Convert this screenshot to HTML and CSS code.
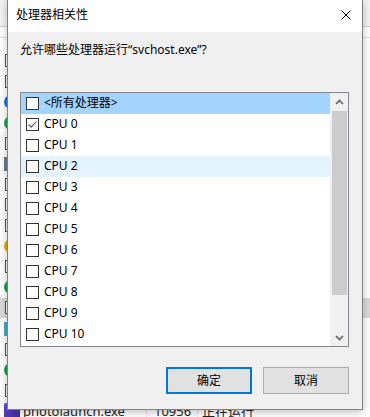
FILE: index.html
```html
<!DOCTYPE html>
<html lang="zh-CN">

<head>
    <title>处理器相关性</title>
    <meta charset="UTF-8" />
    <meta name="viewport" content="width=device-width,initial-scale=1" />
    <link rel="stylesheet" href="styles.css">
</head>

<body>
    <!-- task manager behind the dialog -->
    <div class="backdrop">
        <div class="tm-tabs"></div>
        <div class="tm-head"></div>
        <div class="tm-rows">
            <div class="tm-row"><span class="ico ico-file"></span></div>
            <div class="tm-row"><span class="ico ico-file"></span></div>
            <div class="tm-row"><span class="ico ico-blue"></span></div>
            <div class="tm-row"><span class="ico ico-green"></span></div>
            <div class="tm-row"><span class="ico ico-file"></span></div>
            <div class="tm-row"><span class="ico ico-db"></span></div>
            <div class="tm-row"><span class="ico ico-file"></span></div>
            <div class="tm-row"><span class="ico ico-file"></span></div>
            <div class="tm-row"><span class="ico ico-file"></span></div>
            <div class="tm-row"><span class="ico ico-yellow"></span></div>
            <div class="tm-row"><span class="ico ico-file"></span></div>
            <div class="tm-row"><span class="ico ico-green"></span></div>
            <div class="tm-row selected"><span class="ico ico-file"></span></div>
            <div class="tm-row"><span class="ico ico-cyan"></span></div>
            <div class="tm-row"><span class="ico ico-file"></span></div>
            <div class="tm-row"><span class="ico ico-green"></span></div>
            <div class="tm-row"><span class="ico ico-file"></span></div>
            <div class="tm-row">
                <span class="ico ico-purple"></span>
                <span class="tm-name">photolaunch.exe</span>
                <span class="tm-pid">10956</span>
                <span class="tm-status">正在运行</span>
            </div>
        </div>
    </div>

    <div class="dialog">
        <div class="titlebar">
            <span class="title">处理器相关性</span>
            <svg class="close" width="10" height="10" viewBox="0 0 10 10">
                <path d="M0.5 0.5 L9.5 9.5 M9.5 0.5 L0.5 9.5" stroke="#000" stroke-width="1" fill="none" />
            </svg>
        </div>
        <div class="dialog-body">
            <p class="prompt">允许哪些处理器运行“svchost.exe”?</p>
            <div class="listbox">
                <ul class="cpu-list">
                    <li class="cpu selected"><span class="check"></span>&lt;所有处理器&gt;</li>
                    <li class="cpu"><span class="check checked">
                        <svg width="11" height="11" viewBox="0 0 11 11">
                            <path d="M1.5 5.5 L4.2 8.2 L9.5 2.5" stroke="#555" stroke-width="1.1" fill="none" />
                        </svg>
                    </span>CPU 0</li>
                    <li class="cpu"><span class="check"></span>CPU 1</li>
                    <li class="cpu hover"><span class="check"></span>CPU 2</li>
                    <li class="cpu"><span class="check"></span>CPU 3</li>
                    <li class="cpu"><span class="check"></span>CPU 4</li>
                    <li class="cpu"><span class="check"></span>CPU 5</li>
                    <li class="cpu"><span class="check"></span>CPU 6</li>
                    <li class="cpu"><span class="check"></span>CPU 7</li>
                    <li class="cpu"><span class="check"></span>CPU 8</li>
                    <li class="cpu"><span class="check"></span>CPU 9</li>
                    <li class="cpu"><span class="check"></span>CPU 10</li>
                    <li class="cpu"><span class="check"></span>CPU 11</li>
                </ul>
                <div class="scrollbar">
                    <div class="sb-btn">
                        <svg width="9" height="6" viewBox="0 0 9 6">
                            <path d="M1 5 L4.5 1.5 L8 5" stroke="#606060" stroke-width="1.6" fill="none" />
                        </svg>
                    </div>
                    <div class="sb-track">
                        <div class="sb-thumb"></div>
                    </div>
                    <div class="sb-btn">
                        <svg width="9" height="6" viewBox="0 0 9 6">
                            <path d="M1 1 L4.5 4.5 L8 1" stroke="#606060" stroke-width="1.6" fill="none" />
                        </svg>
                    </div>
                </div>
            </div>
            <div class="buttons">
                <button class="btn default">确定</button>
                <button class="btn">取消</button>
            </div>
        </div>
    </div>
</body>

</html>
```

FILE: styles.css
```css
* {
    box-sizing: border-box;
}

html,
body {
    margin: 0;
    padding: 0;
}

body {
    width: 370px;
    height: 417px;
    overflow: hidden;
    position: relative;
    background: #fff;
    font: 12px/16px "Noto Sans", "Noto Sans CJK SC", sans-serif;
    color: #000;
}

/* Backdrop */
.backdrop {
    display: flex;
    flex-direction: column;
    height: 417px;
}

.tm-tabs {
    height: 27px;
    background: #f3f3f3;
    border-bottom: 1px solid #d0d0d0;
    flex: none;
}

.tm-head {
    height: 11px;
    border-bottom: 1px solid #e0e0e0;
    flex: none;
}

.tm-rows {
    padding-top: 12.5px;
}

.tm-row {
    height: 20.6px;
    display: flex;
    align-items: center;
    position: relative;
}

.tm-row.selected {
    background: #d9d9d9;
}

.ico {
    width: 14px;
    height: 14px;
    margin-left: 4px;
    flex: none;
}

.ico-file {
    border: 1px solid #555;
    background: #fafafa;
    width: 11px;
    height: 13px;
    margin-left: 5px;
    margin-right: 2px;
}

.ico-blue {
    background: #1e6fd0;
    border-radius: 50%;
}

.ico-green {
    background: #1e9e4a;
    border-radius: 50%;
}

.ico-yellow {
    background: #e0b000;
    border-radius: 50%;
}

.ico-cyan {
    background: #4aa6c8;
}

.ico-db {
    background: #6b7a8a;
}

.ico-purple {
    width: 16px;
    height: 16px;
    background: linear-gradient(135deg, #6a4bd8, #3c2a9c);
    border-radius: 2px;
}

.tm-name {
    margin-left: 3px;
    width: 123px;
    font-size: 13px;
    color: #222;
}

.tm-pid {
    border-left: 1px solid #e6e6e6;
    padding-left: 7px;
    width: 51px;
    font-size: 13px;
    color: #222;
}

.tm-status {
    border-left: 1px solid #e6e6e6;
    padding-left: 4px;
    font-size: 13px;
    color: #222;
}

/* Dialog */
.dialog {
    position: absolute;
    left: 7px;
    top: -1px;
    width: 356px;
    height: 411px;
    border: 1px solid #828282;
    background: #f0f0f0;
    box-shadow: 0 2px 8px rgba(0, 0, 0, 0.25);
    display: flex;
    flex-direction: column;
}

.titlebar {
    height: 32px;
    background: #fff;
    display: flex;
    align-items: center;
    padding: 0 10px 2px 8px;
    flex: none;
}

.title {
    flex: 1;
}

.close {
    display: block;
    margin-right: 1px;
}

.dialog-body {
    padding: 10px 13px 0 12px;
}

.prompt {
    margin: 0;
    height: 16px;
}

.listbox {
    margin-top: 34px;
    height: 255px;
    width: 329px;
    border: 1px solid #828790;
    background: #fff;
    display: flex;
    overflow: hidden;
}

.cpu-list {
    list-style: none;
    margin: 0;
    padding: 0;
    width: 310px;
    border-right: 1px solid #eef3fa;
}

.cpu {
    height: 21px;
    display: flex;
    align-items: center;
    padding-left: 5px;
    padding-bottom: 1px;
}

.cpu.selected {
    background: #a2d4fd;
}

.cpu.hover {
    background: #e5f3ff;
}

.check {
    width: 13px;
    height: 13px;
    border: 1px solid #333;
    background: #fff;
    margin-right: 5px;
    display: flex;
    align-items: center;
    justify-content: center;
    flex: none;
}

.check svg {
    display: block;
}

.scrollbar {
    width: 17px;
    background: #f0f0f0;
    display: flex;
    flex-direction: column;
}

.sb-btn {
    height: 17px;
    display: flex;
    align-items: center;
    justify-content: center;
    flex: none;
}

.sb-track {
    flex: 1;
    padding: 1px 1px 0;
}

.sb-thumb {
    height: 184px;
    background: #cdcdcd;
}

.buttons {
    display: flex;
    justify-content: flex-end;
    gap: 11px;
    margin-top: 20px;
    padding-right: 0;
}

.btn {
    width: 86px;
    height: 27px;
    background: #e1e1e1;
    border: 1px solid #adadad;
    font: inherit;
    color: #000;
    padding: 0;
    margin: 0;
}

.btn.default {
    border: 2px solid #0078d7;
}
```
